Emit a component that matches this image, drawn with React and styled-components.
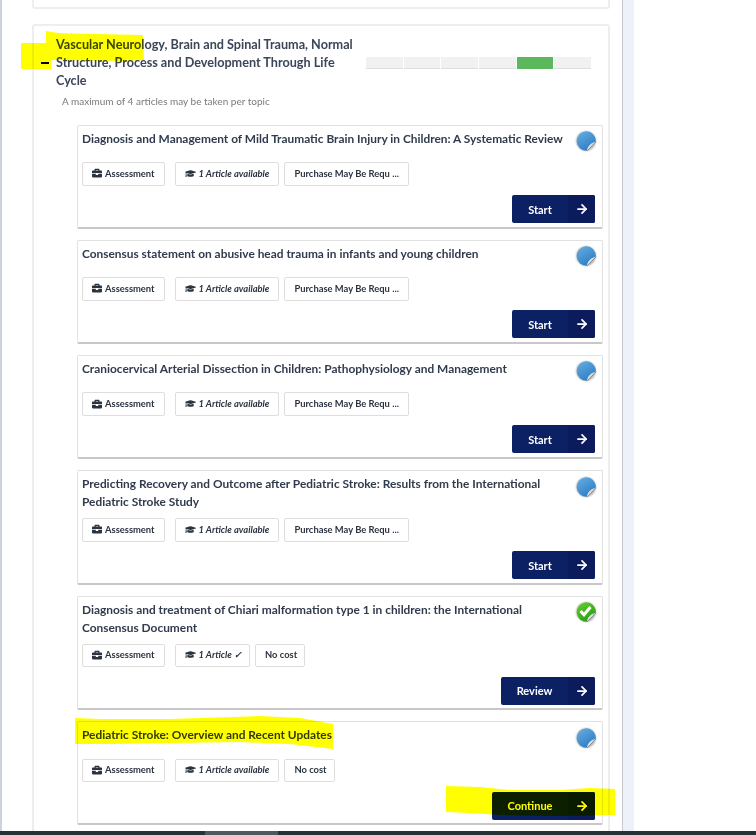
import React from "react";
import styled, { createGlobalStyle } from "styled-components";
import { ArrowRight } from "lucide-react";
import { FaBriefcase, FaGraduationCap } from "react-icons/fa";

const Global = createGlobalStyle`
  html, body { margin: 0; padding: 0; background: #fff; overflow: hidden; }
  body { font-family: "Lato", "Noto Sans", sans-serif; color: #2f3a4a; }
`;

const Frame = styled.div`
  position: relative;
  width: 756px;
  height: 835px;
  overflow: hidden;
  display: flex;
  flex-direction: column;
`;
const Workspace = styled.div`
  flex: 1;
  min-height: 0;
  display: flex;
  overflow: hidden;
`;
const Panel = styled.main`
  width: 623px;
  box-sizing: border-box;
  padding: 0 12px 0 30px;
  border-left: 2px solid #ccd2de;
  border-right: 1px solid #c6c9d0;
  background: #fff;
  display: flex;
  flex-direction: column;
  gap: 15px;
`;
const SideBand = styled.div`
  width: 11px;
  background: #edf1f9;
`;
const Scrollbar = styled.div`
  height: 4px;
  background: #263238;
  padding-left: 205px;
`;
const ScrollThumb = styled.div`
  width: 73px;
  height: 100%;
  background: #50585f;
`;
const ClippedCard = styled.div`
  height: 7px;
  flex: none;
  border: 2px solid #eeeeee;
  border-top: none;
  border-radius: 0 0 3px 3px;
`;
const Section = styled.section`
  flex: none;
  border: 2px solid #eeeeee;
  border-radius: 3px;
  padding: 10px 5px 0 0;
`;
const SectionHead = styled.header`
  display: flex;
  align-items: center;
`;
const Minus = styled.span`
  width: 8px;
  height: 2px;
  margin: 0 7px;
  background: #000;
  flex: none;
`;
const SectionTitle = styled.h2`
  margin: 0;
  width: 310px;
  flex: none;
  font-size: 12.65px;
  line-height: 18px;
  font-weight: 700;
  color: #3b4658;
`;
const Progress = styled.div`
  display: flex;
  width: 225px;
  height: 12px;
  gap: 1px;
`;
const Segment = styled.span`
  flex: 1;
  box-sizing: border-box;
  background: ${(p) => (p.$on ? "#5cb85c" : "#f1f1f1")};
  border-bottom: 1px solid ${(p) => (p.$on ? "#5cb85c" : "#dddddd")};
`;
const SectionNote = styled.p`
  margin: 3px 0 15.5px 28px;
  font-size: 10px;
  line-height: 16px;
  color: #7a7a7a;
`;
const List = styled.div`
  margin-left: 43px;
  display: flex;
  flex-direction: column;
`;
const Card = styled.article`
  position: relative;
  box-sizing: border-box;
  border: 1px solid #e2e2e2;
  border-bottom: 2px solid #c8c8c8;
  border-radius: 2px;
  padding: 0 7px 3.5px 4px;
  margin-bottom: ${(p) => (p.$two ? "11px" : "11.2px")};
  background: #fff;
`;
const CardTitle = styled.h3`
  margin: 0 0 7px;
  padding: 4px 24px 0 0;
  min-height: 25.5px;
  font-size: 11.9px;
  line-height: 18px;
  font-weight: 700;
  color: #303b4c;
`;
const Pills = styled.div`
  display: flex;
`;
const Pill = styled.div`
  box-sizing: border-box;
  height: 23.5px;
  padding: 0 ${(p) => (p.$tight ? "7px" : "9px")} 1px 9px;
  margin-right: ${(p) => (p.$wide ? "10px" : "5px")};
  display: flex;
  align-items: center;
  gap: 3px;
  border: 1px solid #dedede;
  border-radius: 2px;
  font-size: 9.4px;
  font-weight: 700;
  font-style: ${(p) => (p.$italic ? "italic" : "normal")};
  color: #2a3340;
  white-space: nowrap;
`;
const Actions = styled.div`
  display: flex;
  justify-content: flex-end;
  margin-top: 9.5px;
`;
const Action = styled.button`
  width: ${(p) => p.$w}px;
  height: 28px;
  padding: 0;
  border: none;
  border-radius: 2px;
  overflow: hidden;
  display: flex;
  background: #0c2064;
  color: #fff;
  font: 700 11px "Lato", "Noto Sans", sans-serif;
`;
const ActionLabel = styled.span`
  flex: 1;
  align-self: center;
  text-align: center;
`;
const ActionArrow = styled.span`
  width: 27px;
  display: flex;
  align-items: center;
  justify-content: center;
  background: #0b1b5c;
`;
const BadgeSlot = styled.span`
  position: absolute;
  top: 3.5px;
  right: 4px;
  width: 24px;
  height: 24px;
`;
const MarkerLayer = styled.svg`
  position: absolute;
  inset: 0;
  mix-blend-mode: multiply;
  pointer-events: none;
`;

const Sticker = ({ done }) => {
  const id = done ? "gg" : "gb";
  return (
    <BadgeSlot>
      <svg width="24" height="24" viewBox="0 0 24 24">
        <defs>
          <linearGradient id={id} x1="0.2" y1="0" x2="0.8" y2="1">
            <stop offset="0" stopColor={done ? "#63cc2e" : "#62ace0"} />
            <stop offset="1" stopColor={done ? "#239a10" : "#2a78c2"} />
          </linearGradient>
          <radialGradient id={`${id}h`} cx="0.5" cy="0.5" r="0.5">
            <stop offset="0.75" stopColor="#bdbdbd" />
            <stop offset="1" stopColor="#ffffff" stopOpacity="0" />
          </radialGradient>
        </defs>
        <circle cx="12" cy="12" r="12" fill={`url(#${id}h)`} />
        <path d="M12 2.2 A9.8 9.8 0 1 0 13 21.8 L21.8 13 A9.8 9.8 0 0 0 12 2.2Z" fill={`url(#${id})`} />
        <path d="M22 12.5 L12.8 22 C13.5 17 16.8 14 22 12.5Z" fill="#dfe1e3" />
        <path d="M22 12.8 L13.2 22" stroke="#8a8d90" strokeWidth="1" fill="none" />
        {done && <path d="M6.5 11 L10 14.8 L16.5 7" stroke="#fff" strokeWidth="3" fill="none" />}
      </svg>
    </BadgeSlot>
  );
};

const items = [
  { title: "Diagnosis and Management of Mild Traumatic Brain Injury in Children: A Systematic Review", cost: "Purchase May Be Requ ...", label: "Start", w: 83 },
  { title: "Consensus statement on abusive head trauma in infants and young children", cost: "Purchase May Be Requ ...", label: "Start", w: 83 },
  { title: "Craniocervical Arterial Dissection in Children: Pathophysiology and Management", cost: "Purchase May Be Requ ...", label: "Start", w: 83 },
  { title: "Predicting Recovery and Outcome after Pediatric Stroke: Results from the International Pediatric Stroke Study", cost: "Purchase May Be Requ ...", label: "Start", w: 83, two: true },
  { title: "Diagnosis and treatment of Chiari malformation type 1 in children: the International Consensus Document", cost: "No cost", label: "Review", w: 94, two: true, done: true },
  { title: "Pediatric Stroke: Overview and Recent Updates", cost: "No cost", label: "Continue", w: 103 },
];

export default function App() {
  return (
    <Frame>
      <Global />
      <Workspace>
        <Panel>
          <ClippedCard />
          <Section>
            <SectionHead>
              <Minus />
              <SectionTitle>
                Vascular Neurology, Brain and Spinal Trauma, Normal Structure, Process and Development Through Life Cycle
              </SectionTitle>
              <Progress>
                {[0, 1, 2, 3, 4, 5].map((i) => (
                  <Segment key={i} $on={i === 4} />
                ))}
              </Progress>
            </SectionHead>
            <SectionNote>A maximum of 4 articles may be taken per topic</SectionNote>
            <List>
              {items.map((it) => (
                <Card key={it.title} $two={it.two}>
                  <CardTitle>{it.title}</CardTitle>
                  <Sticker done={it.done} />
                  <Pills>
                    <Pill $wide>
                      <FaBriefcase size={10} />
                      Assessment
                    </Pill>
                    <Pill $italic $tight={it.done}>
                      <FaGraduationCap size={11} />
                      {it.done ? "1 Article ✓" : "1 Article available"}
                    </Pill>
                    <Pill $tight={it.cost === "No cost"}>{it.cost}</Pill>
                  </Pills>
                  <Actions>
                    <Action $w={it.w}>
                      <ActionLabel>{it.label}</ActionLabel>
                      <ActionArrow>
                        <ArrowRight size={14} strokeWidth={3} />
                      </ActionArrow>
                    </Action>
                  </Actions>
                </Card>
              ))}
            </List>
          </Section>
        </Panel>
        <SideBand />
      </Workspace>
      <Scrollbar>
        <ScrollThumb />
      </Scrollbar>
      <MarkerLayer width="756" height="835" viewBox="0 0 756 835">
        <path fill="#ffff00" d="M46 31 L58 33 L72 33.5 L143 35 L144 60 L122 61 L51 60 L51 69 L21 69 L21 43 L46 43 Z" />
        <path fill="#ffff00" d="M75 718 L100 719 L170 719 L260 716 L300 718 L333 724 L333 749 L290 744 L240 742 L170 743 L110 744 L75 744 Z" />
        <path fill="#ffff00" d="M446 786 L480 787 L510 790 L560 790 L590 788 L615 789 L615 815 L560 816 L500 815 L470 813 L446 812 Z" />
      </MarkerLayer>
    </Frame>
  );
}
